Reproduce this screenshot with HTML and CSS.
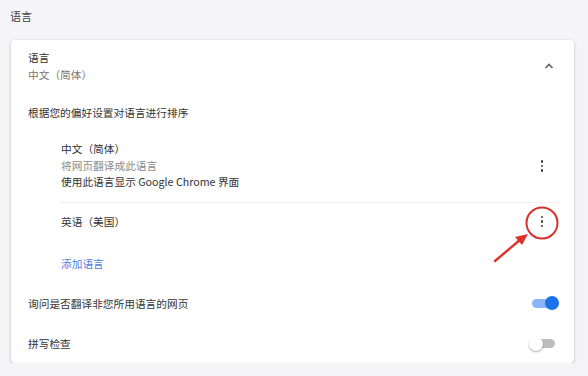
FILE: index.html
```html
<!DOCTYPE html>
<html lang="zh-CN">
<head>
  <meta charset="UTF-8">
  <meta name="viewport" content="width=device-width, initial-scale=1.0">
  <title>语言设置</title>
  <link rel="stylesheet" href="styles.css">
</head>
<body>
  <h2 class="section-title">语言</h2>

  <div class="card">
    <div class="row row-head">
      <div class="text">
        <div>语言</div>
        <div class="secondary">中文（简体）</div>
      </div>
      <svg class="chevron" width="12" height="12" viewBox="0 0 12 12">
        <path d="M2.5 8 L6 4.5 L9.5 8" fill="none" stroke="#5f6368" stroke-width="1.6"/>
      </svg>
    </div>

    <div class="row row-sort">根据您的偏好设置对语言进行排序</div>

    <div class="lang-list">
      <div class="lang lang-first">
        <div class="text">
          <div>中文（简体）</div>
          <div class="muted">将网页翻译成此语言</div>
          <div>使用此语言显示 Google Chrome 界面</div>
        </div>
        <span class="kebab"><i></i><i></i><i></i></span>
      </div>
      <div class="lang lang-second">
        <div class="text">英语（美国）</div>
        <span class="kebab"><i></i><i></i><i></i></span>
      </div>
      <div class="add-lang"><a href="#">添加语言</a></div>
    </div>

    <div class="row row-ask">
      <span>询问是否翻译非您所用语言的网页</span>
      <span class="toggle on"><span class="knob"></span></span>
    </div>
    <div class="row row-spell">
      <span>拼写检查</span>
      <span class="toggle"><span class="knob"></span></span>
    </div>

    <!-- annotation drawn over the menu button -->
    <svg class="mark" width="80" height="70" viewBox="0 0 80 70">
      <circle cx="56" cy="21" r="15.5" fill="none" stroke="#d8312c" stroke-width="2"/>
      <path d="M9 59 L35 37" stroke="#e0302a" stroke-width="2.4" stroke-linecap="round"/>
      <path d="M42 32 L29 35 L36 43 Z" fill="#e0302a"/>
    </svg>
  </div>
</body>
</html>
```

FILE: styles.css
```css
body {
  margin: 0;
  background-color: #f5f5f7;
  font-family: "Noto Sans CJK SC", "Noto Sans", sans-serif;
  font-size: 10.7px;
  color: #333;
}
.section-title {
  margin: 0;
  height: 40px;
  box-sizing: border-box;
  padding: 8px 10px 0;
  font-size: 11px;
  font-weight: normal;
  line-height: 17px;
  color: #3c4043;
}
.card {
  position: relative;
  width: 563px;
  margin-left: 11px;
  background-color: #fff;
  border-radius: 4px;
  box-shadow: 0 1px 2px rgba(60, 64, 67, 0.25), 0 1px 3px 1px rgba(60, 64, 67, 0.1);
}
.row {
  display: flex;
  align-items: center;
  justify-content: space-between;
  padding: 0 16px 0 17px;
  box-sizing: border-box;
}
.text {
  line-height: 17px;
}
.secondary {
  color: #777;
}
.muted {
  color: #8a8a8a;
}
.row-head {
  height: 52px;
  padding-right: 19px;
}
.row-sort {
  height: 40px;
}
.lang-list {
  padding-left: 50px;
  padding-right: 14px;
}
.lang {
  display: flex;
  align-items: center;
  justify-content: space-between;
  padding-right: 16px;
}
.lang-first {
  padding: 9px 16px 11px 0;
  border-bottom: 1px solid #efefef;
}
.lang-first .text {
  line-height: 16.7px;
}
.lang-second {
  height: 37px;
}
.kebab {
  display: flex;
  flex-direction: column;
  gap: 2px;
  width: 4px;
  align-items: center;
}
.kebab i {
  display: block;
  width: 2.4px;
  height: 2.4px;
  border-radius: 50%;
  background-color: #3c4043;
}
.add-lang {
  height: 46px;
  display: flex;
  align-items: center;
}
.add-lang a {
  color: #4a7ddf;
  text-decoration: none;
}
.row-ask {
  height: 34px;
  padding-right: 18px;
}
.row-spell {
  height: 43px;
  padding-top: 4px;
  padding-right: 19px;
}
.toggle {
  position: relative;
  width: 24px;
  height: 9px;
  border-radius: 5px;
  background-color: #bdbdbd;
}
.toggle .knob {
  position: absolute;
  top: -2.5px;
  left: -2px;
  width: 14px;
  height: 14px;
  border-radius: 50%;
  background-color: #fff;
  box-shadow: 0 1px 2px rgba(0, 0, 0, 0.35);
}
.toggle.on {
  background-color: #8ab4f8;
}
.toggle.on .knob {
  left: auto;
  right: -3px;
  background-color: #1a73e8;
  box-shadow: none;
}
.mark {
  position: absolute;
  left: 475px;
  top: 162px;
}
```
